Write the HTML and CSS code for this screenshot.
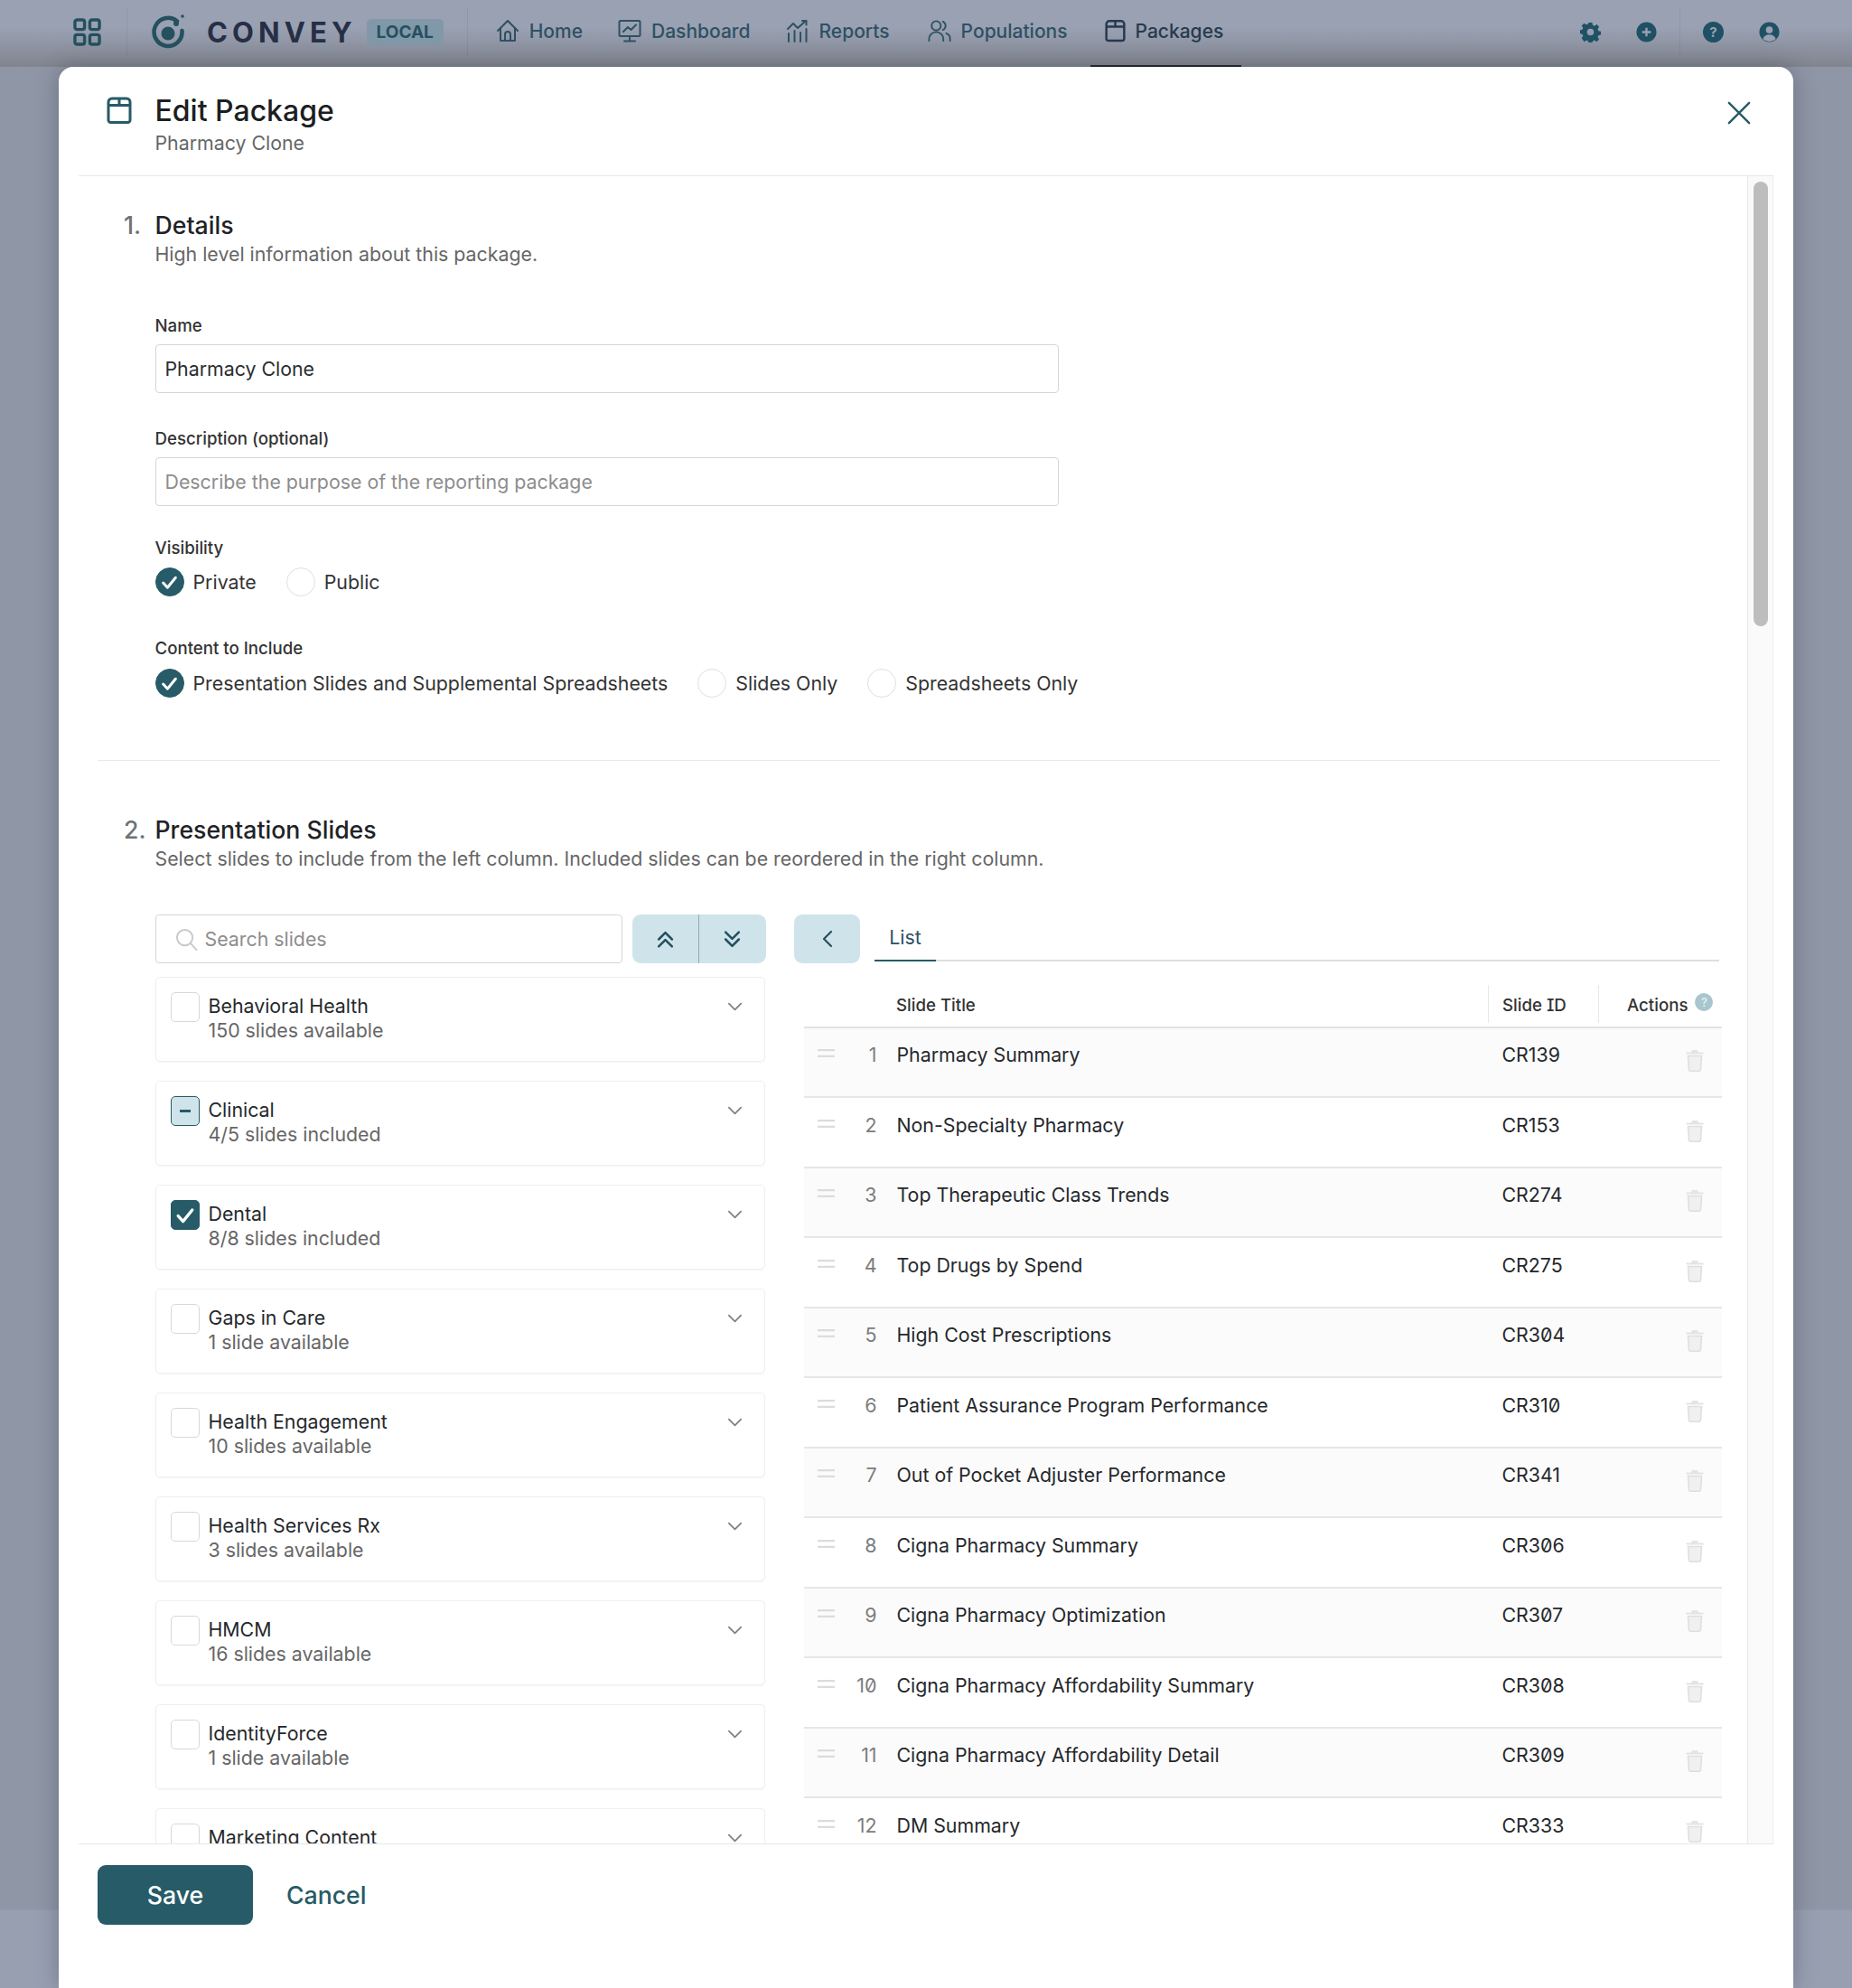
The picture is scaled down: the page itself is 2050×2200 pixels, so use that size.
FILE: index.html
```html
<!DOCTYPE html>
<html lang="en">
<head>
<meta charset="utf-8">
<title>Edit Package</title>
<link rel="stylesheet" href="styles.css">
</head>
<body>
<svg class="sprite" width="0" height="0">
  <defs>
    <symbol id="pkg" viewBox="0 0 28 30"><path d="M6 2h16a4 4 0 0 1 4 4v20a2.500 2.500 0 0 1-2.500 2.500h-19A2.500 2.500 0 0 1 2 26V6a4 4 0 0 1 4-4zM2.500 9.500h23M14 2.500v7" fill="none" stroke="currentColor" stroke-width="3" stroke-linejoin="round"/></symbol>
    <symbol id="chev" viewBox="0 0 20 12"><path d="M2 2l8 8 8-8" fill="none" stroke="currentColor" stroke-width="2" stroke-linecap="round" stroke-linejoin="round"/></symbol>
    <symbol id="check" viewBox="0 0 20 20"><path d="M3.500 10.500l4.500 5L16.500 5" fill="none" stroke="#fff" stroke-width="2.800" stroke-linecap="round" stroke-linejoin="round"/></symbol>
    <symbol id="trash" viewBox="0 0 20 25"><path d="M7 1h6l1 2.500h5.500v2H.5v-2H6z" fill="#e4e4e4"/><path d="M2.500 7.500h15l-1 15a2 2 0 0 1-2 1.800h-9a2 2 0 0 1-2-1.800z" fill="#f0f0f0" stroke="#dedede" stroke-width="1.500"/></symbol>
    <symbol id="drag" viewBox="0 0 19 9"><path d="M0 1.200h19M0 7.800h19" stroke="#dcdcdc" stroke-width="2.200"/></symbol>
  </defs>
</svg>

<div class="app">
  <header class="topbar">
    <svg class="grid-icon" viewBox="0 0 32 32"><g fill="none" stroke="currentColor" stroke-width="3.500"><rect x="2" y="2" width="11" height="11" rx="2.500"/><rect x="19" y="2" width="11" height="11" rx="2.500"/><rect x="2" y="19" width="11" height="11" rx="2.500"/><rect x="19" y="19" width="11" height="11" rx="2.500"/></g></svg>
    <span class="vsep sep-a"></span>
    <svg class="logo-icon" viewBox="0 0 38 40"><path d="M28 8.500A15.500 15.500 0 1 0 33.500 19" fill="none" stroke="currentColor" stroke-width="4.500" stroke-linecap="round"/><circle cx="18" cy="22" r="7.500" fill="currentColor"/><circle cx="27" cy="11" r="3" fill="currentColor"/><circle cx="34" cy="3" r="1.800" fill="currentColor"/></svg>
    <span class="brand">CONVEY</span>
    <span class="badge">LOCAL</span>
    <span class="vsep sep-b"></span>
    <nav class="nav">
      <a class="nav-item"><svg class="nav-icon" viewBox="0 0 26 26"><path d="M2 13L13 2l11 11M5 10.500V24h16V10.500M10 24v-7a3 3 0 0 1 6 0v7" fill="none" stroke="currentColor" stroke-width="2" stroke-linecap="round" stroke-linejoin="round"/></svg>Home</a>
      <a class="nav-item"><svg class="nav-icon" viewBox="0 0 26 26"><path d="M3 2h20a1.500 1.500 0 0 1 1.500 1.500v14A1.500 1.500 0 0 1 23 19H3a1.500 1.500 0 0 1-1.500-1.500v-14A1.500 1.500 0 0 1 3 2zM6 14l5-5 3.500 3L20 6.500M13 19v5M7 24.500h12" fill="none" stroke="currentColor" stroke-width="2" stroke-linecap="round" stroke-linejoin="round"/></svg>Dashboard</a>
      <a class="nav-item"><svg class="nav-icon" viewBox="0 0 26 26"><path d="M3 25v-9M9.500 25V13M16 25V15M22.500 25V11M2 11l6-6 5 5 9-8M18 2h4.500v4.500" fill="none" stroke="currentColor" stroke-width="2" stroke-linecap="round" stroke-linejoin="round"/></svg>Reports</a>
      <a class="nav-item nav-pop"><svg class="nav-icon" viewBox="0 0 28 26"><circle cx="10" cy="7" r="5.500" fill="none" stroke="currentColor" stroke-width="2"/><path d="M1.500 25v-2a8.500 8.500 0 0 1 17 0v2M18 2a5.500 5.500 0 0 1 0 10M22 16a7 7 0 0 1 4.500 7v2" fill="none" stroke="currentColor" stroke-width="2" stroke-linecap="round"/></svg>Populations</a>
      <a class="nav-item nav-active"><svg class="nav-icon pkg-nav"><use href="#pkg"/></svg>Packages</a>
    </nav>
    <div class="top-actions">
      <svg class="top-icon" viewBox="0 0 24 24"><path fill="currentColor" fill-rule="evenodd" d="M10 1h4l.6 3 2 .9 2.600-1.700 2.800 2.800-1.700 2.600.9 2 3 .6v4l-3 .6-.9 2 1.700 2.600-2.800 2.800-2.600-1.700-2 .9-.6 3h-4l-.6-3-2-.9-2.600 1.700L1.800 19l1.700-2.600-.9-2-3-.6v-4l3-.6.9-2L1.800 4.600 4.600 1.800 7.200 3.500l2-.9zM12 8a4 4 0 1 0 0 8 4 4 0 0 0 0-8z"/></svg>
      <svg class="top-icon gap-a" viewBox="0 0 24 24"><circle cx="12" cy="12" r="11.500" fill="currentColor"/><path d="M12 7v10M7 12h10" stroke="#9aa1b3" stroke-width="2.400"/></svg>
      <span class="vsep sep-c"></span>
      <span class="top-icon gap-b help-dot">?</span>
      <svg class="top-icon gap-a" viewBox="0 0 24 24"><circle cx="12" cy="12" r="11.500" fill="currentColor"/><circle cx="12" cy="9.500" r="4" fill="#9aa1b3"/><path d="M4.500 20a8 8 0 0 1 15 0 11 11 0 0 1-15 0z" fill="#9aa1b3"/></svg>
    </div>
  </header>
  <div class="page-band"></div>
</div>

<div class="modal">
  <div class="modal-head">
    <svg class="head-icon"><use href="#pkg"/></svg>
    <div class="head-text">
      <h1 class="head-title">Edit Package</h1>
      <p class="head-sub">Pharmacy Clone</p>
    </div>
    <svg class="close-icon" viewBox="0 0 28 28"><path d="M2 2l24 24M26 2L2 26" fill="none" stroke="currentColor" stroke-width="2.600" stroke-linecap="round"/></svg>
  </div>

  <div class="modal-body">
    <div class="scroll-pane">
      <section class="section section-one">
        <div class="sec-head">
          <span class="sec-num">1.</span>
          <div>
            <h2 class="sec-title">Details</h2>
            <p class="sec-sub">High level information about this package.</p>
          </div>
        </div>
        <div class="form">
          <label class="field-label label-name">Name</label>
          <div class="input">Pharmacy Clone</div>
          <label class="field-label label-desc">Description (optional)</label>
          <div class="input input-ph">Describe the purpose of the reporting package</div>
          <label class="field-label label-vis">Visibility</label>
          <div class="radio-row">
            <span class="radio radio-on"><svg class="radio-check"><use href="#check"/></svg></span><span class="radio-text">Private</span>
            <span class="radio"></span><span class="radio-text">Public</span>
          </div>
          <label class="field-label label-content">Content to Include</label>
          <div class="radio-row">
            <span class="radio radio-on"><svg class="radio-check"><use href="#check"/></svg></span><span class="radio-text">Presentation Slides and Supplemental Spreadsheets</span>
            <span class="radio"></span><span class="radio-text">Slides Only</span>
            <span class="radio"></span><span class="radio-text">Spreadsheets Only</span>
          </div>
        </div>
      </section>

      <section class="section section-two">
        <div class="sec-head">
          <span class="sec-num">2.</span>
          <div>
            <h2 class="sec-title">Presentation Slides</h2>
            <p class="sec-sub">Select slides to include from the left column. Included slides can be reordered in the right column.</p>
          </div>
        </div>

        <div class="columns">
          <div class="col-left">
            <div class="search-row">
              <div class="search">
                <svg class="search-icon" viewBox="0 0 26 26"><circle cx="11" cy="11" r="9" fill="none" stroke="#c9c9c9" stroke-width="2"/><path d="M17.500 17.500L24.500 25" stroke="#c9c9c9" stroke-width="2" stroke-linecap="round"/></svg>
                Search slides
              </div>
              <div class="btn-group">
                <button class="icon-btn"><svg class="dbl" viewBox="0 0 20 20"><path d="M3 10l7-7 7 7M3 17.500l7-7 7 7" fill="none" stroke="currentColor" stroke-width="2.400" stroke-linecap="round" stroke-linejoin="round"/></svg></button>
                <button class="icon-btn icon-btn-last"><svg class="dbl" viewBox="0 0 20 20"><path d="M3 2.500l7 7 7-7M3 10l7 7 7-7" fill="none" stroke="currentColor" stroke-width="2.400" stroke-linecap="round" stroke-linejoin="round"/></svg></button>
              </div>
            </div>

            <div class="card"><span class="cb"></span><div class="card-text"><div class="card-name">Behavioral Health</div><div class="card-sub">150 slides available</div></div><svg class="card-chev"><use href="#chev"/></svg></div>
            <div class="card"><span class="cb cb-mixed"><span class="cb-dash"></span></span><div class="card-text"><div class="card-name">Clinical</div><div class="card-sub">4/5 slides included</div></div><svg class="card-chev"><use href="#chev"/></svg></div>
            <div class="card"><span class="cb cb-on"><svg class="cb-check"><use href="#check"/></svg></span><div class="card-text"><div class="card-name">Dental</div><div class="card-sub">8/8 slides included</div></div><svg class="card-chev"><use href="#chev"/></svg></div>
            <div class="card"><span class="cb"></span><div class="card-text"><div class="card-name">Gaps in Care</div><div class="card-sub">1 slide available</div></div><svg class="card-chev"><use href="#chev"/></svg></div>
            <div class="card"><span class="cb"></span><div class="card-text"><div class="card-name">Health Engagement</div><div class="card-sub">10 slides available</div></div><svg class="card-chev"><use href="#chev"/></svg></div>
            <div class="card"><span class="cb"></span><div class="card-text"><div class="card-name">Health Services Rx</div><div class="card-sub">3 slides available</div></div><svg class="card-chev"><use href="#chev"/></svg></div>
            <div class="card"><span class="cb"></span><div class="card-text"><div class="card-name">HMCM</div><div class="card-sub">16 slides available</div></div><svg class="card-chev"><use href="#chev"/></svg></div>
            <div class="card"><span class="cb"></span><div class="card-text"><div class="card-name">IdentityForce</div><div class="card-sub">1 slide available</div></div><svg class="card-chev"><use href="#chev"/></svg></div>
            <div class="card"><span class="cb"></span><div class="card-text"><div class="card-name">Marketing Content</div></div><svg class="card-chev"><use href="#chev"/></svg></div>
          </div>

          <div class="col-right">
            <div class="tab-row">
              <button class="icon-btn back-btn"><svg class="back-icon" viewBox="0 0 12 20"><path d="M10 2l-8 8 8 8" fill="none" stroke="currentColor" stroke-width="2.200" stroke-linecap="round" stroke-linejoin="round"/></svg></button>
              <div class="tabs"><span class="tab">List</span></div>
            </div>
            <div class="table">
              <div class="t-head">
                <span class="th-title">Slide Title</span>
                <span class="th-id">Slide ID</span>
                <span class="th-actions">Actions<span class="th-help">?</span></span>
              </div>
              <div class="t-row"><svg class="drag"><use href="#drag"/></svg><span class="t-num">1</span><span class="t-title">Pharmacy Summary</span><span class="t-id">CR139</span><svg class="trash"><use href="#trash"/></svg></div>
              <div class="t-row"><svg class="drag"><use href="#drag"/></svg><span class="t-num">2</span><span class="t-title">Non-Specialty Pharmacy</span><span class="t-id">CR153</span><svg class="trash"><use href="#trash"/></svg></div>
              <div class="t-row"><svg class="drag"><use href="#drag"/></svg><span class="t-num">3</span><span class="t-title">Top Therapeutic Class Trends</span><span class="t-id">CR274</span><svg class="trash"><use href="#trash"/></svg></div>
              <div class="t-row"><svg class="drag"><use href="#drag"/></svg><span class="t-num">4</span><span class="t-title">Top Drugs by Spend</span><span class="t-id">CR275</span><svg class="trash"><use href="#trash"/></svg></div>
              <div class="t-row"><svg class="drag"><use href="#drag"/></svg><span class="t-num">5</span><span class="t-title">High Cost Prescriptions</span><span class="t-id">CR304</span><svg class="trash"><use href="#trash"/></svg></div>
              <div class="t-row"><svg class="drag"><use href="#drag"/></svg><span class="t-num">6</span><span class="t-title">Patient Assurance Program Performance</span><span class="t-id">CR310</span><svg class="trash"><use href="#trash"/></svg></div>
              <div class="t-row"><svg class="drag"><use href="#drag"/></svg><span class="t-num">7</span><span class="t-title">Out of Pocket Adjuster Performance</span><span class="t-id">CR341</span><svg class="trash"><use href="#trash"/></svg></div>
              <div class="t-row"><svg class="drag"><use href="#drag"/></svg><span class="t-num">8</span><span class="t-title">Cigna Pharmacy Summary</span><span class="t-id">CR306</span><svg class="trash"><use href="#trash"/></svg></div>
              <div class="t-row"><svg class="drag"><use href="#drag"/></svg><span class="t-num">9</span><span class="t-title">Cigna Pharmacy Optimization</span><span class="t-id">CR307</span><svg class="trash"><use href="#trash"/></svg></div>
              <div class="t-row"><svg class="drag"><use href="#drag"/></svg><span class="t-num">10</span><span class="t-title">Cigna Pharmacy Affordability Summary</span><span class="t-id">CR308</span><svg class="trash"><use href="#trash"/></svg></div>
              <div class="t-row"><svg class="drag"><use href="#drag"/></svg><span class="t-num">11</span><span class="t-title">Cigna Pharmacy Affordability Detail</span><span class="t-id">CR309</span><svg class="trash"><use href="#trash"/></svg></div>
              <div class="t-row"><svg class="drag"><use href="#drag"/></svg><span class="t-num">12</span><span class="t-title">DM Summary</span><span class="t-id">CR333</span><svg class="trash"><use href="#trash"/></svg></div>
            </div>
          </div>
        </div>
      </section>
    </div>
    <div class="scroll-track"><div class="scroll-thumb"></div></div>
  </div>

  <div class="modal-foot">
    <button class="save">Save</button>
    <button class="cancel">Cancel</button>
  </div>
</div>
</body>
</html>
```
FILE: styles.css
```css
* { box-sizing: border-box; }
html, body { margin: 0; height: 2200px; overflow: hidden; }
body {
  font-family: Inter, "Noto Sans", sans-serif;
  background: #8f96a6;
  color: #1f2326;
  font-size: 21.330px;
  position: relative;
}
h1, h2, p { margin: 0; font-weight: normal; }
button { font-family: inherit; border: 0; padding: 0; }
.sprite { position: absolute; }

.app { height: 2200px; display: flex; flex-direction: column; }
.topbar {
  height: 74px;
  flex: none;
  display: flex;
  align-items: center;
  padding: 0 0 4px 81px;
  background: linear-gradient(#9aa1b3 0, #9aa1b3 30px, #80858f 74px);
  color: #24505f;
}
.page-band { flex: 1; background: linear-gradient(#8f96a6 0, #8f96a6 2039px, #989fb1 2040px); }
.grid-icon { width: 31px; height: 31px; flex: none; }
.vsep { width: 1px; height: 54px; background: rgba(70, 80, 100, 0.12); flex: none; }
.sep-a { margin-left: 28px; }
.logo-icon { width: 38px; height: 40px; margin-left: 27px; flex: none; color: #24505f; }
.brand { margin-left: 23px; font-size: 31px; font-weight: 700; letter-spacing: 5.100px; color: #262f45; line-height: 1; }
.badge {
  margin-left: 11px;
  width: 85px; height: 29px;
  border-radius: 5px;
  background: #8198a9;
  color: #26505f;
  font-size: 19px; font-weight: 700;
  display: flex; align-items: center; justify-content: center;
}
.sep-b { margin-left: 26px; }
.nav { display: flex; margin-left: 17px; height: 74px; margin-bottom: -4px; }
.nav-item {
  display: flex; align-items: center; gap: 11px;
  font-size: 21px; font-weight: 500; color: #2d5163;
  padding: 0 14px 6px; margin-right: 11px;
  height: 74px;
}
.nav-pop { margin-left: 3px; }
.nav-icon { width: 26px; height: 26px; flex: none; }
.pkg-nav { width: 23px; height: 26px; }
.nav-active { color: #263a4d; border-bottom: 2px solid #22262e; padding: 0 20px 4px 16px; margin-left: 0; }
.top-actions { margin-left: auto; margin-right: 80px; display: flex; align-items: center; }
.top-icon { width: 23px; height: 23px; color: #1f5064; flex: none; }
.gap-a { margin-left: 39px; }
.gap-b { margin-left: 25px; }
.sep-c { margin-left: 25px; }
.help-dot {
  border-radius: 50%; background: #1f5064; color: #9aa1b3;
  font-size: 15px; font-weight: 700; display: flex; align-items: center; justify-content: center;
}

.modal {
  position: absolute;
  left: 65px; top: 74px;
  width: 1920px; height: 2126px;
  background: #fff;
  border-radius: 16px 16px 0 0;
  box-shadow: 0 0 24px rgba(40, 45, 60, 0.35);
  display: flex; flex-direction: column;
  padding: 0 22px;
}
.modal-head {
  height: 121px; flex: none;
  display: flex; align-items: flex-start;
  padding-left: 31px;
  border-bottom: 1.500px solid #e8e8e8;
}
.head-icon { width: 28px; height: 30px; margin-top: 33px; color: #265b67; flex: none; }
.head-text { margin-left: 25.500px; margin-top: 30px; }
.head-title { font-size: 32px; line-height: 38px; font-weight: 500; color: #1c1f22; }
.head-sub { font-size: 21.330px; line-height: 30px; color: #666; margin-top: 1px; }
.close-icon { width: 26px; height: 26px; margin-left: auto; margin-top: 38px; margin-right: 25px; color: #265b67; flex: none; }

.modal-body {
  height: 1846px; flex: none;
  display: flex;
  overflow: hidden;
  border-bottom: 1.500px solid #e8e8e8;
}
.scroll-pane { flex: 1; overflow: hidden; min-width: 0; }
.scroll-track {
  width: 29px; flex: none;
  background: #fafafa;
  border-left: 1.500px solid #e8e8e8;
  border-right: 1.500px solid #eee;
  padding: 6px 5px 0 6px;
}
.scroll-thumb { height: 492px; border-radius: 8px; background: #bdbdbd; }

.section { padding-left: 50px; margin-right: 30px; }
.section-one { padding-top: 36px; height: 647px; margin-left: 21px; padding-left: 29px; border-bottom: 1.500px solid #e8e8e8; margin-right: 30px; }
.section-two { padding-top: 58px; margin-right: 0; }
.sec-head { display: flex; }
.sec-num { width: 34.500px; font-size: 26.670px; line-height: 36px; font-weight: 500; color: #6f7275; flex: none; }
.sec-title { font-size: 26.670px; line-height: 36px; font-weight: 500; color: #1f2326; }
.sec-sub { font-size: 21.330px; line-height: 28px; color: #666; }

.form { margin-left: 34.500px; width: 1100px; }
.field-label { display: block; font-size: 18.670px; line-height: 26px; font-weight: 500; color: #333; }
.label-name { margin-top: 53px; margin-bottom: 7px; }
.label-desc { margin-top: 38px; margin-bottom: 7px; }
.label-vis { margin-top: 34px; margin-bottom: 7px; }
.label-content { margin-top: 43.500px; margin-bottom: 8.500px; }
.input {
  width: 1000px; height: 54px;
  border: 1.500px solid #d6d6d6; border-radius: 4px;
  padding: 0 10px;
  display: flex; align-items: center;
  font-size: 21.330px; color: #2a2d30;
}
.input-ph { color: #8d8d8d; }
.radio-row { display: flex; align-items: center; height: 34px; white-space: nowrap; }
.radio {
  width: 32px; height: 32px; border-radius: 50%;
  border: 1.500px solid #e0e0e0; flex: none; margin-right: 10px;
  display: flex; align-items: center; justify-content: center;
}
.radio-on { background: #265b67; border-color: #265b67; }
.radio-check { width: 21px; height: 21px; }
.radio-text { font-size: 21.330px; color: #333; margin-right: 33px; }

.columns { display: flex; margin-top: 48px; }
.col-left { width: 675px; margin-left: 34.500px; flex: none; }
.col-right { width: 1030px; margin-left: 32.500px; flex: none; }
.search-row { display: flex; gap: 11px; margin-bottom: 15px; }
.search {
  width: 517px; height: 54px; flex: none;
  border: 1.500px solid #d6d6d6; border-radius: 4px;
  display: flex; align-items: center;
  padding-left: 21px; gap: 8px;
  font-size: 21.330px; color: #8d8d8d;
}
.search-icon { width: 25px; height: 25px; flex: none; }
.btn-group { display: flex; }
.icon-btn {
  width: 74px; height: 54px;
  background: #cfe4ea; color: #24505f;
  display: flex; align-items: center; justify-content: center;
  border-radius: 9px 0 0 9px;
  border-right: 1px solid #8fa9b3;
}
.icon-btn-last { border-radius: 0 9px 9px 0; border-right: 0; }
.dbl { width: 21px; height: 21px; }
.card {
  height: 94px;
  margin-bottom: 21px;
  border: 1.500px solid #eee; border-radius: 5px;
  box-shadow: 0 1px 2px rgba(0, 0, 0, 0.04);
  display: flex; align-items: flex-start;
  padding: 16px 0 0 16px;
}
.cb { width: 32px; height: 33px; border: 1.500px solid #d8d8d8; border-radius: 5px; flex: none; display: flex; align-items: center; justify-content: center; }
.cb-mixed { background: #cfe4ea; border-color: #265b67; }
.cb-dash { width: 12px; height: 2.500px; background: #265b67; }
.cb-on { background: #265b67; border-color: #265b67; }
.cb-check { width: 24px; height: 24px; }
.card-text { margin-left: 10px; margin-top: 2px; }
.card-name { font-size: 21.330px; line-height: 26.500px; color: #25282b; }
.card-sub { font-size: 21.330px; line-height: 26px; color: #666; }
.card-chev { width: 17px; height: 10px; margin-left: auto; margin-right: 24px; margin-top: 11px; color: #7c7f82; flex: none; }

.tab-row { display: flex; }
.back-btn { border-radius: 9px; border: 0; width: 73px; flex: none; }
.back-icon { width: 12px; height: 20px; }
.tabs { margin-left: 16px; width: 935px; height: 52px; border-bottom: 2px solid #dedede; display: flex; }
.tab { width: 68px; height: 52px; display: flex; align-items: center; justify-content: center; font-size: 21.330px; color: #2d5163; border-bottom: 2px solid #265b67; }
.table { margin-left: 11px; width: 1016px; margin-top: 24px; font-feature-settings: "zero", "cv08"; }
.t-head {
  height: 47.500px;
  display: flex; align-items: stretch;
  border-bottom: 2px solid #e2e2e2;
  font-size: 18.670px; font-weight: 500; color: #333;
  line-height: 45px;
}
.th-title { margin-left: 102px; width: 656px; border-right: 1.500px solid #e8e8e8; margin-bottom: 4px; flex: none; }
.th-id { width: 122px; padding-left: 15px; border-right: 1.500px solid #e8e8e8; margin-bottom: 4px; flex: none; }
.th-actions { display: flex; align-items: flex-start; gap: 8px; margin-left: 31px; }
.th-help { width: 20px; height: 20px; border-radius: 50%; background: #a9c6cf; color: #e8f1f3; font-size: 13px; line-height: 20px; display: flex; align-items: center; justify-content: center; margin-top: 9px; }
.t-row {
  height: 77.500px;
  border-bottom: 2px solid #e6e6e6;
  display: flex; align-items: flex-start;
  font-size: 21.330px; line-height: 28px; color: #25282b;
  padding-top: 15.500px;
}
.t-row:nth-child(even) { background: #fbfbfb; }
.drag { width: 19px; height: 9px; margin-left: 15px; margin-top: 8px; flex: none; }
.t-num { width: 46.500px; text-align: right; color: #7a7d80; flex: none; }
.t-title { margin-left: 22px; width: 670px; flex: none; }
.t-id { width: 203px; flex: none; }
.trash { width: 20px; height: 25px; margin-top: 8px; flex: none; }

.modal-foot { flex: 1; display: flex; align-items: flex-start; padding: 23px 0 0 21px; }
.save {
  width: 172px; height: 66px;
  background: #265b67; color: #fff;
  border-radius: 9px;
  font-size: 26.670px; font-weight: 500;
}
.cancel { background: none; color: #265b67; font-size: 26.670px; font-weight: 500; margin-left: 37px; height: 66px; }
```
